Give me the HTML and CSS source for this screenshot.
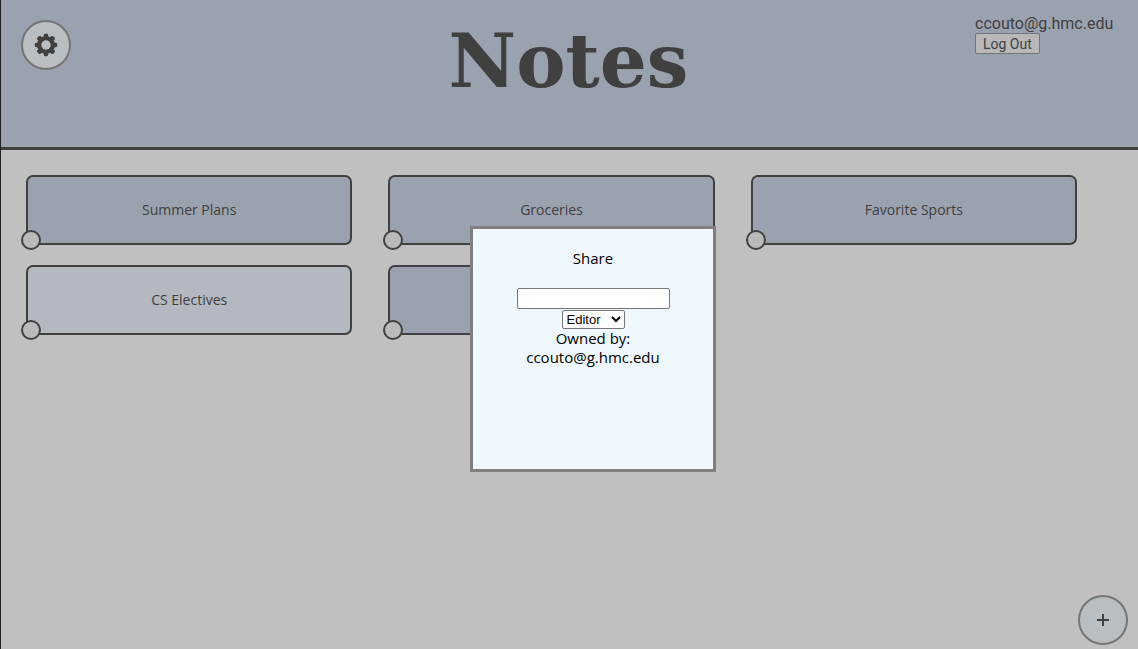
FILE: index.html
```html
<!DOCTYPE html>
<html lang="en">
<head>
<meta charset="utf-8">
<meta name="viewport" content="width=device-width, initial-scale=1">
<title>Notes</title>
<link rel="stylesheet" href="styles.css">
</head>
<body>
<header class="header">
  <div class="header-side">
    <button class="round-button" type="button" aria-label="Settings">
      <svg class="gear" viewBox="0 0 24 24" aria-hidden="true">
        <g fill="currentColor">
          <rect x="9.8" y="0.8" width="4.4" height="22.4" rx="1.4"/>
          <rect x="9.6" y="0.8" width="4.8" height="22.4" rx="1.4" transform="rotate(45 12 12)"/>
          <rect x="9.8" y="0.8" width="4.4" height="22.4" rx="1.4" transform="rotate(90 12 12)"/>
          <rect x="9.6" y="0.8" width="4.8" height="22.4" rx="1.4" transform="rotate(135 12 12)"/>
          <circle cx="12" cy="12" r="9"/>
        </g>
        <circle class="gear-hole" cx="12" cy="12" r="4.7"/>
      </svg>
    </button>
  </div>
  <h1 class="title">Notes</h1>
  <div class="header-side account">
    <div class="account-box">
      <div class="email">ccouto@g.hmc.edu</div>
      <button class="logout" type="button">Log Out</button>
    </div>
  </div>
</header>
<main class="notes">
  <article class="note">Summer Plans<button class="dot" type="button" aria-label="Share Summer Plans"></button></article>
  <article class="note">Groceries<button class="dot" type="button" aria-label="Share Groceries"></button></article>
  <article class="note">Favorite Sports<button class="dot" type="button" aria-label="Share Favorite Sports"></button></article>
  <article class="note note-shared">CS Electives<button class="dot" type="button" aria-label="Share CS Electives"></button></article>
  <article class="note"><button class="dot" type="button" aria-label="Share note"></button></article>
</main>
<button class="round-button add" type="button" aria-label="Add note">
  <svg class="plus" viewBox="0 0 12 12" aria-hidden="true"><path d="M6 0v12M0 6h12" stroke="currentColor" stroke-width="2"/></svg>
</button>
<section class="modal" role="dialog" aria-labelledby="share-title">
  <h2 class="modal-title" id="share-title">Share</h2>
  <input class="share-input" type="text" aria-label="Share with">
  <select class="role" aria-label="Role"><option>Editor</option><option>Viewer</option></select>
  <p class="owner">Owned by:<br>ccouto@g.hmc.edu</p>
</section>
</body>
</html>
```
FILE: styles.css
```css
* { box-sizing: border-box; }

body {
  margin: 0;
  min-height: 100vh;
  border-left: 1px solid #202020;
  background: #c0c0c0;
  color: #404040;
  font-family: "Trebuchet MS", "Open Sans", sans-serif;
}

.header {
  display: grid;
  grid-template-columns: 1fr auto 1fr;
  align-items: start;
  min-height: 150px;
  padding: 15px 22px 0 20px;
  border-bottom: 3px solid #404040;
  background: #9ba2af;
}

.header-side { padding-top: 5px; }

.title {
  margin: 0;
  font: bold 74px/92px "DejaVu Serif", serif;
}

.account {
  display: flex;
  justify-content: flex-end;
  padding-top: 0;
}

.account-box { min-width: 141px; }

.email { font: 16px/18px Roboto, sans-serif; }

.logout {
  display: block;
  height: 21px;
  padding: 0 7px;
  border: 1px solid #757575;
  border-radius: 2px;
  background: #b8b8b8;
  color: #404040;
  font: 14px/18px Roboto, sans-serif;
}

.round-button {
  display: flex;
  align-items: center;
  justify-content: center;
  width: 50px;
  height: 50px;
  padding: 0;
  border: 2px solid #757575;
  border-radius: 50%;
  background: #b8bec1;
  color: #404040;
}

.gear { width: 24px; height: 24px; }
.gear-hole { fill: #b8bec1; }
.plus { width: 12px; height: 12px; }

.add {
  position: fixed;
  right: 10px;
  bottom: 4px;
}

.notes {
  display: grid;
  grid-template-columns: repeat(3, 1fr);
  gap: 20px 36px;
  padding: 25px 61px 25px 25px;
}

.note {
  position: relative;
  display: flex;
  align-items: center;
  justify-content: center;
  min-height: 70px;
  padding-bottom: 2px;
  border: 2px solid #404040;
  border-radius: 7px;
  background: #9ba2af;
  font-size: 14px;
}

.note-shared { background: #b4b9c1; }

.dot {
  position: absolute;
  left: -7px;
  bottom: -7px;
  width: 20px;
  height: 20px;
  padding: 0;
  border: 2px solid #404040;
  border-radius: 50%;
  background: #bababa;
}

.modal {
  position: fixed;
  top: 226px;
  left: calc(50% - 99px);
  display: flex;
  flex-direction: column;
  align-items: center;
  width: 246px;
  height: 246px;
  padding-top: 20px;
  border: 3px solid #808080;
  background: #f0f8ff;
  color: #000;
  font-size: 15px;
  line-height: 19px;
  text-align: center;
}

.modal-title {
  margin: 0 0 20px;
  font-size: 15px;
  font-weight: normal;
}

.owner { margin: 0; }

.share-input {
  width: 153px;
  height: 21px;
  margin: 0 0 1px;
  border: 1px solid #767676;
  border-radius: 2px;
}

.role {
  width: 63px;
  height: 19px;
  border: 1px solid #767676;
  border-radius: 2px;
  background: #fff;
  color: #000;
  font: 13px "Liberation Sans", sans-serif;
}
```
